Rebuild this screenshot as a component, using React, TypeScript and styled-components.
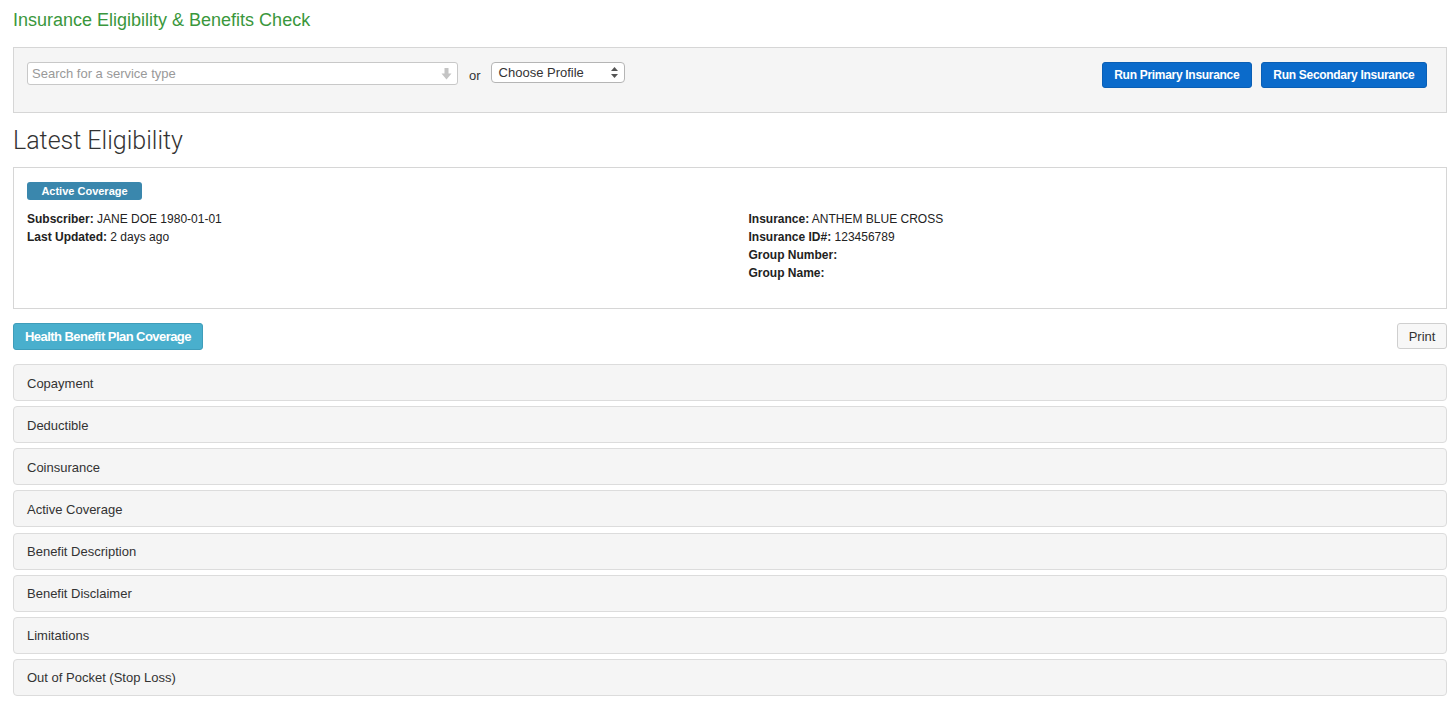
import React from "react";
import styled, { createGlobalStyle } from "styled-components";

const Global = createGlobalStyle`
  html, body { margin: 0; padding: 0; background: #fff; }
  body {
    font-family: "Liberation Sans", Arial, Helvetica, sans-serif;
    color: #333;
    font-size: 13px;
  }
  * { box-sizing: border-box; }
`;

const Page = styled.div`
  padding: 0 9px 0 13px;
  display: flex;
  flex-direction: column;
`;

const Title = styled.h1`
  margin: 10px 0 17px;
  font-size: 18px;
  line-height: 20px;
  font-weight: 400;
  color: #3a973c;
`;

const Toolbar = styled.div`
  display: flex;
  align-items: flex-start;
  background: #f5f5f5;
  border: 1px solid #d6d6d6;
  padding: 14px 19px 23px 13px;
  height: 66px;
`;

const SearchBox = styled.div`
  position: relative;
  width: 431px;
  height: 23px;
  background: #fff;
  border: 1px solid #c8c8c8;
  border-radius: 3px;
  display: flex;
  align-items: center;
  padding: 0 4px;
  color: #999;
  font-size: 13px;
`;

const SearchArrow = styled.svg`
  position: absolute;
  right: 5px;
  top: 5px;
`;

const OrText = styled.span`
  margin: 6px 10px 0 11px;
  font-size: 13px;
  color: #333;
`;

const Select = styled.div`
  width: 134px;
  height: 21px;
  background: #fff;
  border: 1px solid #b5b5b5;
  border-radius: 4px;
  display: flex;
  align-items: center;
  justify-content: space-between;
  padding: 0 6px 0 7px;
  font-size: 13px;
  color: #333;
`;

const Spacer = styled.div`
  flex: 1;
`;

const ButtonGroup = styled.div`
  display: flex;
  gap: 9px;
`;

const PrimaryButton = styled.button`
  height: 26px;
  padding: 0 11.5px;
  background: #0b6bcb;
  border: 1px solid #0a5fb5;
  border-radius: 3px;
  color: #fff;
  font-family: inherit;
  font-size: 12px;
  font-weight: 700;
  letter-spacing: -0.3px;
`;

const Heading = styled.h2`
  margin: 11px 0 9px;
  font-family: Roboto, "Liberation Sans", sans-serif;
  font-weight: 300;
  font-size: 25px;
  line-height: 34px;
  color: #333;
`;

const Card = styled.div`
  border: 1px solid #d6d6d6;
  padding: 14px 13px 26px;
  display: flex;
  flex-direction: column;
  gap: 10px;
`;

const Badge = styled.span`
  align-self: flex-start;
  display: inline-flex;
  align-items: center;
  justify-content: center;
  width: 115px;
  height: 18px;
  background: #3a87ad;
  border-radius: 3px;
  color: #fff;
  font-size: 11px;
  font-weight: 700;
`;

const InfoGrid = styled.div`
  display: grid;
  grid-template-columns: 1fr 1fr;
  column-gap: 37px;
`;

const InfoCol = styled.div`
  display: flex;
  flex-direction: column;
`;

const InfoLine = styled.div`
  font-size: 12px;
  line-height: 18px;
  color: #222;
  b { font-weight: 700; }
`;

const ActionRow = styled.div`
  display: flex;
  justify-content: space-between;
  align-items: flex-start;
  margin: 14px 0 14px;
`;

const InfoButton = styled.button`
  height: 27px;
  padding: 0 11px;
  background: #49afcd;
  border: 1px solid #3f9dba;
  border-radius: 3px;
  color: #fff;
  font-family: inherit;
  font-size: 13px;
  font-weight: 700;
  letter-spacing: -0.55px;
`;

const PrintButton = styled.button`
  height: 26px;
  width: 50px;
  background: #f7f7f7;
  border: 1px solid #cfcfcf;
  border-radius: 3px;
  color: #333;
  font-family: inherit;
  font-size: 13px;
`;

const PanelList = styled.div`
  display: flex;
  flex-direction: column;
  gap: 5.15px;
`;

const Panel = styled.div`
  height: 37px;
  background: #f5f5f5;
  border: 1px solid #dcdcdc;
  border-radius: 4px;
  display: flex;
  align-items: center;
  padding: 1px 13px 0;
  font-size: 13px;
  color: #333;
`;

const panels = [
  "Copayment",
  "Deductible",
  "Coinsurance",
  "Active Coverage",
  "Benefit Description",
  "Benefit Disclaimer",
  "Limitations",
  "Out of Pocket (Stop Loss)",
];

export default function App() {
  return (
    <>
      <Global />
      <Page>
        <Title>Insurance Eligibility &amp; Benefits Check</Title>
        <Toolbar>
          <SearchBox>
            Search for a service type
            <SearchArrow width="11" height="12" viewBox="0 0 11 12">
              <path d="M3.5 0 H7.5 V5.5 H10.5 L5.5 11.5 L0.5 5.5 H3.5 Z" fill="#c4c4c4" />
            </SearchArrow>
          </SearchBox>
          <OrText>or</OrText>
          <Select>
            Choose Profile
            <svg width="7" height="11" viewBox="0 0 7 11">
              <path d="M3.5 0 L7 4 H0 Z" fill="#555" />
              <path d="M3.5 11 L7 7 H0 Z" fill="#555" />
            </svg>
          </Select>
          <Spacer />
          <ButtonGroup>
            <PrimaryButton>Run Primary Insurance</PrimaryButton>
            <PrimaryButton>Run Secondary Insurance</PrimaryButton>
          </ButtonGroup>
        </Toolbar>
        <Heading>Latest Eligibility</Heading>
        <Card>
          <Badge>Active Coverage</Badge>
          <InfoGrid>
            <InfoCol>
              <InfoLine><b>Subscriber:</b> JANE DOE 1980-01-01</InfoLine>
              <InfoLine><b>Last Updated:</b> 2 days ago</InfoLine>
            </InfoCol>
            <InfoCol>
              <InfoLine><b>Insurance:</b> ANTHEM BLUE CROSS</InfoLine>
              <InfoLine><b>Insurance ID#:</b> 123456789</InfoLine>
              <InfoLine><b>Group Number:</b></InfoLine>
              <InfoLine><b>Group Name:</b></InfoLine>
            </InfoCol>
          </InfoGrid>
        </Card>
        <ActionRow>
          <InfoButton>Health Benefit Plan Coverage</InfoButton>
          <PrintButton>Print</PrintButton>
        </ActionRow>
        <PanelList>
          {panels.map((p) => (
            <Panel key={p}>{p}</Panel>
          ))}
        </PanelList>
      </Page>
    </>
  );
}
